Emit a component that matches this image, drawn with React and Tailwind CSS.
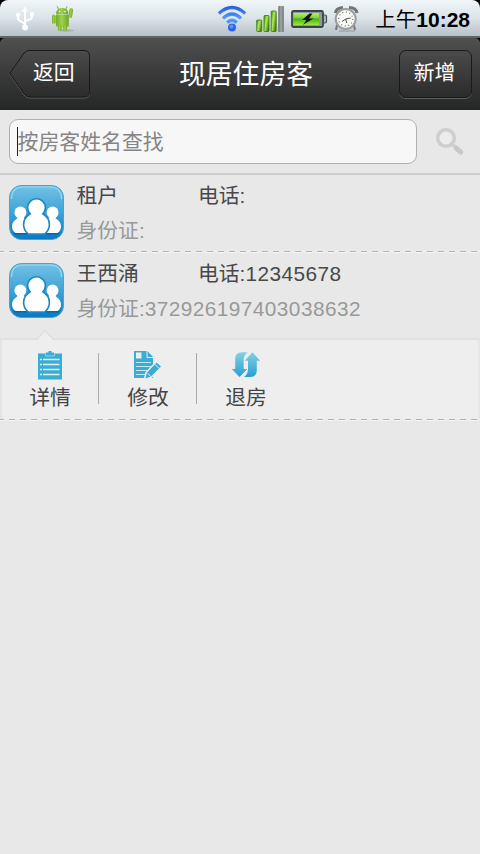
import React from 'react';

function UsbIcon() {
  return (
    <svg className="h-[26px] w-[20px]" viewBox="0 0 20 26" fill="none" stroke="#fff" strokeWidth="2">
      <path d="M10 4v17M10 18.500C9 15.500 3 16 3 12V9M10 15.500C12 13.500 17 14 17 11V8" />
      <path d="M10 0.500l3.300 5H6.700z" fill="#fff" stroke="none" />
      <circle cx="10" cy="21.500" r="3" fill="#fff" stroke="none" />
      <circle cx="3" cy="9" r="2.200" fill="#fff" stroke="none" />
      <rect x="15" y="6" width="4" height="4" fill="#fff" stroke="none" />
    </svg>
  );
}

function AndroidIcon() {
  return (
    <svg className="h-[28px] w-[25px]" viewBox="0 0 25 28">
      <defs>
        <linearGradient id="droid" x1="0" x2="1">
          <stop offset="0" stopColor="#74a92b" />
          <stop offset=".45" stopColor="#9ed24f" />
          <stop offset="1" stopColor="#6fa326" />
        </linearGradient>
      </defs>
      <ellipse cx="16" cy="25.500" rx="7" ry="1.200" fill="#7b8a80" opacity=".4" />
      <g fill="url(#droid)">
        <path d="M5 9.500C5 5 7.500 3 11.200 3S17.500 5 17.500 9.500z" />
        <path d="M5 10h12.800v10q0 2-2 2H7q-2 0-2-2z" />
        <rect x="1" y="9.500" width="3.600" height="9.500" rx="1.800" />
        <rect x="18" y="3" width="3.600" height="10" rx="1.800" transform="rotate(8 19.600 8)" />
        <rect x="7" y="20" width="3.600" height="6.500" rx="1.800" />
        <rect x="12.300" y="20" width="3.600" height="6.500" rx="1.800" />
      </g>
      <path d="M7.500 4L6 1.200M14.800 4l1.400-2.600" stroke="#7fae38" strokeWidth="1" />
      <circle cx="8.500" cy="6.500" r=".8" fill="#fff" />
      <circle cx="14" cy="6.500" r=".8" fill="#fff" />
    </svg>
  );
}

function WifiIcon() {
  return (
    <svg className="h-[28px] w-[30px]" viewBox="0 0 30 28" fill="none" stroke="url(#wifi)" strokeWidth="3.200">
      <defs>
        <linearGradient id="wifi" gradientUnits="userSpaceOnUse" x1="0" y1="0" x2="0" y2="28">
          <stop offset="0" stopColor="#2459d8" />
          <stop offset=".5" stopColor="#559bfa" />
          <stop offset="1" stopColor="#2b64eb" />
        </linearGradient>
      </defs>
      <path d="M1.800 8.500Q15 -3.500 28.200 8.500" />
      <path d="M6 13.300Q15 4.800 24 13.300" />
      <path d="M10.200 17.500Q15 13 19.800 17.500" />
      <circle cx="15" cy="22.500" r="4" fill="#2d63e6" stroke="none" />
      <circle cx="14.500" cy="21.500" r="2" fill="#5b93f7" stroke="none" />
    </svg>
  );
}

function SignalIcon() {
  return (
    <svg className="h-[28px] w-[28px]" viewBox="0 0 28 28">
      <defs>
        <linearGradient id="bars" x1="0" x2="1" y1="0" y2=".6">
          <stop offset="0" stopColor="#3d8b12" />
          <stop offset=".5" stopColor="#b0eb4e" />
          <stop offset="1" stopColor="#40890e" />
        </linearGradient>
        <linearGradient id="grayBar" x1="0" x2="1">
          <stop offset="0" stopColor="#666b6d" />
          <stop offset=".5" stopColor="#a4a8aa" />
          <stop offset="1" stopColor="#696e70" />
        </linearGradient>
      </defs>
      <g fill="url(#bars)" stroke="#337616" strokeWidth=".8">
        <rect x=".7" y="15" width="5" height="11.500" rx=".7" />
        <rect x="8" y="10.500" width="5" height="16" rx=".7" />
        <rect x="15.200" y="6" width="5" height="20.500" rx=".7" />
      </g>
      <rect x="22.300" y="1" width="5.500" height="26" rx=".7" fill="url(#grayBar)" />
    </svg>
  );
}

function BatteryIcon() {
  return (
    <svg className="h-[18px] w-[37px]" viewBox="0 0 37 18">
      <defs>
        <linearGradient id="charge" x1="0" x2="0" y1="0" y2="1">
          <stop offset="0" stopColor="#b1ed70" />
          <stop offset=".4" stopColor="#7fd23c" />
          <stop offset=".5" stopColor="#4bb012" />
          <stop offset="1" stopColor="#9ae840" />
        </linearGradient>
      </defs>
      <rect x="31" y="5" width="4.500" height="8" rx="1.500" fill="#aeb6bb" stroke="#47525a" strokeWidth="1.200" />
      <rect x="1" y="1" width="31" height="16" rx="1.500" fill="#8f989c" stroke="#3a454b" strokeWidth="1.800" />
      <rect x="2.500" y="3" width="25.500" height="12" fill="url(#charge)" />
      <path d="M18.500 3.500L11 10h4.500L12 14.800 22.500 8.400h-4.500L21.500 3.500z" fill="#101510" />
    </svg>
  );
}

function AlarmIcon() {
  return (
    <svg className="h-[28px] w-[26px]" viewBox="0 0 26 28">
      <path d="M2.500 8Q3 3 10 2.500M16 2.500Q23 2.500 24 8" fill="none" stroke="#707576" strokeWidth="3.200" />
      <path d="M4 20l-1 5M21 20l1 5" stroke="#777" strokeWidth="2" />
      <circle cx="12.700" cy="14" r="10" fill="#f8f8f5" stroke="#9a9e9f" strokeWidth="2" />
      <circle cx="12.700" cy="14" r="7" fill="none" stroke="#777a7c" strokeWidth="1.300" strokeDasharray="1 2.660" />
      <path d="M12.700 14l5-1M12.700 14L9 16.500M12.700 14l1 4" stroke="#555" strokeWidth="1" />
      <path d="M6 26h16" stroke="#9a9fa1" strokeWidth="1.200" />
    </svg>
  );
}

function StatusBar() {
  return (
    <div className="h-[38px] bg-black">
      <div className="flex h-[38px] items-center rounded-t-[8px] border-b-2 border-[#5d6569] bg-linear-to-b from-[#f0f6f9] via-[#dce4e8] to-[#b7c1c6] pt-[2px] pr-[10px] pl-[15px]">
        <UsbIcon />
        <div className="ml-[16px]"><AndroidIcon /></div>
        <div className="ml-[141px]"><WifiIcon /></div>
        <div className="ml-[9px]"><SignalIcon /></div>
        <div className="ml-[7px]"><BatteryIcon /></div>
        <div className="ml-[5px]"><AlarmIcon /></div>
        <div className="ml-auto flex items-center pt-[1px] whitespace-nowrap text-black">
          <span className="text-[20.5px] leading-[30px]">上午</span>
          <span className="text-[21px] leading-[30px] font-bold">10:28</span>
        </div>
      </div>
    </div>
  );
}

function Header() {
  return (
    <div className="bg-black">
      <header className="flex h-[72px] items-start justify-between rounded-t-[5px] bg-linear-to-b from-[#505050] to-[#252626] pt-[12px] pr-[8px] pl-[9px] text-white">
        <div className="relative h-[49px] w-[82px]">
          <svg className="absolute inset-0 h-[49px] w-[82px]" viewBox="0 0 82 49">
            <defs>
              <linearGradient id="back" x1="0" x2="0" y1="0" y2="1">
                <stop offset="0" stopColor="#4b4b4b" />
                <stop offset="1" stopColor="#2b2b2b" />
              </linearGradient>
            </defs>
            <path d="M.8 24.500L15 4Q17.500 1.500 20 1.500H75Q80.500 1.500 80.500 7V42.500Q80.500 48 75 48H20Q17.500 48 15 45z" fill="none" stroke="#606060" />
            <path d="M.8 23.500L15 3Q17.500 .5 20 .5H75Q80.500 .5 80.500 6V41.500Q80.500 47 75 47H20Q17.500 47 15 44z" fill="url(#back)" stroke="#191919" />
          </svg>
          <button className="relative block pt-[8px] pl-[24px] text-[20.8px] leading-[30px]">返回</button>
        </div>
        <h1 className="pt-[7px] pl-[2px] text-[26.8px] leading-[36px]">现居住房客</h1>
        <button className="h-[48px] w-[73px] rounded-[7px] border border-[#191919] bg-linear-to-b from-[#4b4b4b] to-[#2b2b2b] pr-[2px] pb-[2px] text-[20.8px] leading-[30px] shadow-[0_1px_0_#5e5e5e]">新增</button>
      </header>
    </div>
  );
}

function SearchBar() {
  return (
    <div className="flex h-[65px] items-start border-b-2 border-[#cecece] pt-[9px] pl-[9px]">
      <div className="flex h-[45px] w-[408px] items-center rounded-[9px] border border-[#b0b0b0] bg-[#f7f7f7] pl-[7px]">
        <div className="h-[29px] w-px bg-[#222]" />
        <span className="-ml-[0.5px] text-[20.9px] leading-[30px] text-[#858585]">按房客姓名查找</span>
      </div>
      <svg className="mt-[8px] ml-[18px] h-[29px] w-[30px]" viewBox="0 0 30 29" fill="none">
        <path d="M17 17l4 3.500" stroke="#d2d2d2" strokeWidth="3" />
        <path d="M21 20.800l4.700 4.300" stroke="#c8c8c8" strokeWidth="5" strokeLinecap="round" />
        <circle cx="11" cy="11" r="8.300" fill="#ececec" stroke="#cecece" strokeWidth="3.600" />
      </svg>
    </div>
  );
}

function PeopleIcon({ id }) {
  const gradient = 'people-' + id;
  return (
    <svg className="h-[55px] w-[55px] shrink-0" viewBox="0 0 55 55">
      <defs>
        <linearGradient id={gradient} x1="0" x2="0" y1="0" y2="1">
          <stop offset="0" stopColor="#72c2e6" />
          <stop offset=".5" stopColor="#40a3d5" />
          <stop offset="1" stopColor="#0579c4" />
        </linearGradient>
      </defs>
      <rect x=".5" y=".5" width="54" height="54" rx="12" fill={'url(#' + gradient + ')'} stroke="#4ba2cc" />
      <path d="M2.500 14Q2.500 2 14 2H41Q52.500 2 52.500 14" fill="none" stroke="#9fd8f0" strokeWidth="1.200" />
      <path d="M5 48.500h45" stroke="#0a65a4" strokeWidth="2" />
      <g fill="#fff">
        <circle cx="11.400" cy="27.500" r="5.900" />
        <circle cx="43.600" cy="27.500" r="5.900" />
        <path d="M8.200 31h6.400q0 2 3 4L20 48H6.500Q3 45.500 3 41.500Q3 36.500 8.200 33.500z" />
        <path d="M46.800 31h-6.400q0 2-3 4L35 48h13.500Q52 45.500 52 41.500Q52 36.500 46.800 33.500z" />
        <path d="M19.500 48.300Q15.400 44.500 15.400 39.500Q15.400 33 22.300 29Q19.400 26.500 19.400 22.700A8.100 8.100 0 0 1 35.600 22.700Q35.600 26.500 32.700 29Q39.600 33 39.600 39.500Q39.600 44.500 35.500 48.300z" stroke="#1c86c2" strokeWidth="3.200" />
        <path d="M19.500 48.300Q15.400 44.500 15.400 39.500Q15.400 33 22.300 29Q19.400 26.500 19.400 22.700A8.100 8.100 0 0 1 35.600 22.700Q35.600 26.500 32.700 29Q39.600 33 39.600 39.500Q39.600 44.500 35.500 48.300z" />
      </g>
    </svg>
  );
}

function TenantRow({ id, name, phone, idCard }) {
  return (
    <div className="flex h-[76px] pt-[10px] pl-[9px]">
      <PeopleIcon id={id} />
      <div className="-mt-[4px] ml-[12.5px] text-[20.8px] leading-[30px] whitespace-nowrap">
        <div className="flex text-[#484848]">
          <span className="w-[121.5px]">{name}</span>
          <span>电话:<span className="tracking-[0.45px]">{phone}</span></span>
        </div>
        <div className="mt-[5px] text-[#999]">身份证:<span className="tracking-[0.45px]">{idCard}</span></div>
      </div>
    </div>
  );
}

function DashedLine() {
  return (
    <div className="h-[2px] bg-[#ededed]">
      <svg className="block h-[2px] w-full" viewBox="0 0 480 2" preserveAspectRatio="none">
        <path d="M0 .5H480" stroke="#b2b2b2" strokeDasharray="6 5" strokeDashoffset="2" />
        <path d="M0 1.500H480" stroke="#f5f5f5" strokeDasharray="6 5" strokeDashoffset="2" />
      </svg>
    </div>
  );
}

function DetailIcon() {
  return (
    <svg className="h-[29px] w-[26px]" viewBox="0 0 26 29">
      <path d="M1 2.500h8V1.500h2.500V0h3v1.500H17v1h8v26H1z" fill="#3bacd3" />
      <path d="M8.500 3v2h9V3" fill="none" stroke="#a9dbeb" strokeWidth=".8" />
      <path d="M6 8.500H22.500M6 13.500H22.500M6 18.500H22.500M6 23.500H22.500M3 8.500h2M3 13.500h2M3 18.500h2M3 23.500h2" stroke="#dff1f8" strokeWidth="1.300" />
    </svg>
  );
}

function EditIcon() {
  return (
    <svg className="h-[29px] w-[30px]" viewBox="0 0 30 29">
      <path d="M1 0h13.500L20 6v21H1z" fill="#3bacd3" />
      <path d="M3 1.500h5.500v6H3z" fill="#eee" />
      <path d="M14 0v6.500h6" fill="none" stroke="#e9f5f9" strokeWidth="1" />
      <path d="M3 11.500h15M3 15.500h15M3 19.500h11M3 23.500h9" stroke="#c5e5f0" strokeWidth="1.200" />
      <path d="M11.500 28.500l1.500-7L23.500 10.500l5.500 5L18 26.500z" fill="#3bacd3" stroke="#eee" strokeWidth="1.500" />
      <path d="M14.300 22l3.700 3.700M22 13.500l4.500 4.200" stroke="#eee" />
    </svg>
  );
}

function LeaveIcon() {
  return (
    <svg className="h-[28px] w-[30px]" viewBox="0 0 30 28">
      <defs>
        <linearGradient id="leave" gradientUnits="userSpaceOnUse" x1="0" x2="0" y1="0" y2="27">
          <stop offset="0" stopColor="#8ad3e3" />
          <stop offset="1" stopColor="#229dd4" />
        </linearGradient>
      </defs>
      <path d="M16.700 1.300Q12.700 4 12.700 9V18h3.600L8.500 26 .8 18h3.400V8Q4.200 1.300 11 1.300z" fill="url(#leave)" />
      <path d="M13 26Q17 23 17 18V9.800h-3.400L21.500 1.300 29.200 9.800h-3.400V19Q25.800 26 19 26z" fill="url(#leave)" />
    </svg>
  );
}

function Action({ icon, label }) {
  return (
    <button className="flex w-[98px] flex-col items-center pt-[11px] text-[#454545]">
      <span className="flex h-[30px] items-start">{icon}</span>
      <span className="mt-[1px] text-[20.8px] leading-[32px]">{label}</span>
    </button>
  );
}

function ActionPanel() {
  return (
    <div className="relative flex h-[81px] border-t-2 border-r-2 border-l-2 border-t-[#e1e1e1] border-r-[#e6e6e6] border-l-[#e4e4e4] bg-[#eee]">
      <svg className="absolute -top-[11px] left-[33px] h-[12px] w-[20px]" viewBox="0 0 20 12">
        <path d="M0 12L10 1.500 20 12z" fill="#eee" />
        <path d="M1 11L10 1.500 19 11" fill="none" stroke="#dedede" strokeWidth="1.500" />
      </svg>
      <div className="-ml-px flex">
        <Action icon={<DetailIcon />} label="详情" />
        <div className="mt-[13px] -ml-px h-[51px] w-px bg-[#aaa]" />
        <Action icon={<EditIcon />} label="修改" />
        <div className="mt-[13px] -ml-px h-[51px] w-px bg-[#aaa]" />
        <Action icon={<LeaveIcon />} label="退房" />
      </div>
    </div>
  );
}

export default function App() {
  return (
    <main className="h-[854px] w-[480px] overflow-hidden bg-[#e8e8e8] font-['Liberation_Sans','Noto_Sans_CJK_SC',sans-serif]">
      <StatusBar />
      <Header />
      <SearchBar />
      <TenantRow id="1" name="租户" phone="" idCard="" />
      <DashedLine />
      <TenantRow id="2" name="王西涌" phone="12345678" idCard="372926197403038632" />
      <div className="h-[9px]" />
      <ActionPanel />
      <DashedLine />
    </main>
  );
}
